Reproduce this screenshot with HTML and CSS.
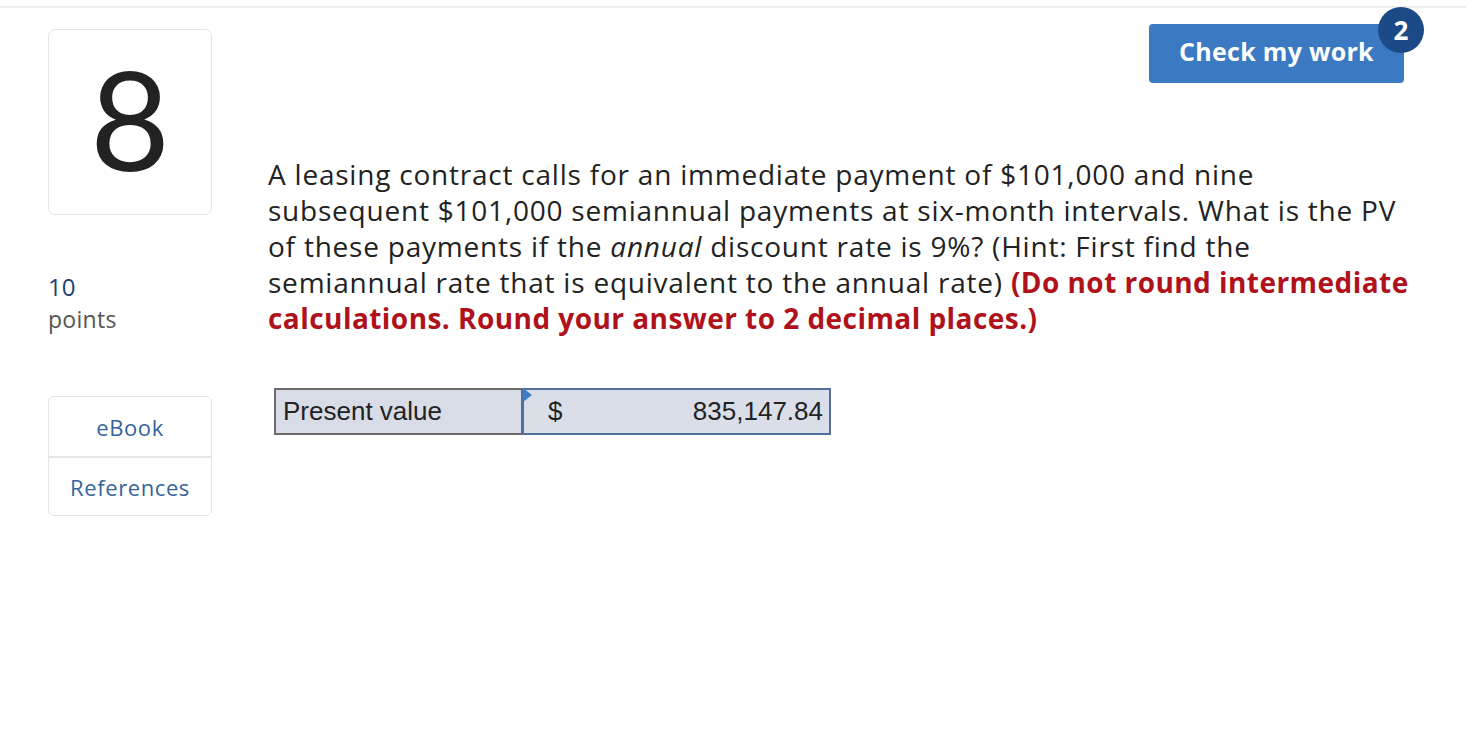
FILE: index.html
```html
<!DOCTYPE html>
<html>
<head>
<meta charset="utf-8">
<link rel="stylesheet" href="styles.css">
</head>
<body>
<div class="topline"></div>
<div class="page">
  <aside class="side">
    <div class="qnum">8</div>
    <div class="points"><div class="pts-num">10</div><div class="pts-label">points</div></div>
    <div class="links">
      <div class="link">eBook</div>
      <div class="link">References</div>
    </div>
  </aside>
  <main class="main">
    <div class="toolbar">
      <button class="check">Check my work<span class="badge">2</span></button>
    </div>
    <p class="question">A leasing contract calls for an immediate payment of $101,000 and nine<br>subsequent $101,000 semiannual payments at six-month intervals. What is the PV<br>of these payments if the <em>annual</em> discount rate is 9%? (Hint: First find the<br>semiannual rate that is equivalent to the annual rate) <strong class="warn">(Do not round intermediate<br>calculations. Round your answer to 2 decimal places.)</strong></p>
    <div class="answer">
      <div class="label">Present value</div>
      <div class="input"><span class="cur">$</span><span class="val">835,147.84</span></div>
    </div>
  </main>
</div>
</body>
</html>
```
FILE: styles.css
```css
html, body { margin: 0; padding: 0; background: #fff; }
body { font-family: "Open Sans", "Lato", sans-serif; color: #222; }
.topline { height: 2px; margin-top: 6px; background: #eeeeee; }
.page { display: flex; padding-left: 48px; }
.side { width: 164px; flex: none; padding-top: 21px; }
.qnum {
  box-sizing: border-box; height: 186px; border: 1px solid #e6e6e6; border-radius: 7px;
  display: flex; align-items: center; justify-content: center;
  font-family: "Lato", sans-serif;
  font-size: 138px; font-weight: 400; color: #222; line-height: 1; padding-bottom: 8px;
}
.points { margin-top: 56px; }
.pts-num { font-size: 24px; color: #1d4273; line-height: 32px; }
.pts-label { font-size: 23px; letter-spacing: 0.3px; color: #555; line-height: 32px; }
.links { margin-top: 61px; border: 1px solid #e6e6e6; border-radius: 6px; }
.link { height: 59px; display: flex; align-items: center; justify-content: center; font-size: 22px; letter-spacing: 0.6px; color: #36649c; }
.link + .link { border-top: 2px solid #e6e6e6; height: 57px; }
.main { flex: 1; padding-left: 56px; padding-right: 62px; }
.toolbar { display: flex; justify-content: flex-end; padding-top: 16px; }
.check {
  position: relative; width: 255px; height: 59px; border: none; border-radius: 4px;
  background: #3b79c3; color: #fff; font-family: "Open Sans", sans-serif; font-weight: 700;
  font-size: 25px; letter-spacing: 0.3px; padding: 0 0 6px 0; margin-right: 0;
}
.badge {
  position: absolute; right: -20px; top: -17px; width: 46px; height: 46px; border-radius: 50%;
  background: #1c4a86; color: #fff; font-size: 26px; font-weight: 700; letter-spacing: 0;
  display: flex; align-items: center; justify-content: center;
}
.question { margin: 73px -20px 0 0; font-size: 28px; letter-spacing: 0.78px; line-height: 36px; color: #222; white-space: nowrap; }
.question em { font-style: italic; }
.warn { color: #b0121b; font-weight: 700; letter-spacing: 0.45px; }
.answer { display: flex; margin: 52px 0 0 6px; font-family: "Liberation Sans", Arial, sans-serif; font-size: 26px; color: #222; }
.label {
  box-sizing: border-box; width: 248px; height: 47px; border: 2px solid #6b6b6b; border-right-width: 1px;
  background: #d8dce6; padding-left: 7px; display: flex; align-items: center;
}
.input {
  position: relative; box-sizing: border-box; width: 309px; height: 47px; border: 2px solid #52709b;
  background: #d9dee9; padding: 0 6px 0 24px;
  display: flex; align-items: center; justify-content: space-between;
}
.input::before {
  content: ""; position: absolute; left: -1px; top: -2px; border-top: 7px solid transparent;
  border-bottom: 7px solid transparent; border-left: 9px solid #3b7bc8;
}
```
